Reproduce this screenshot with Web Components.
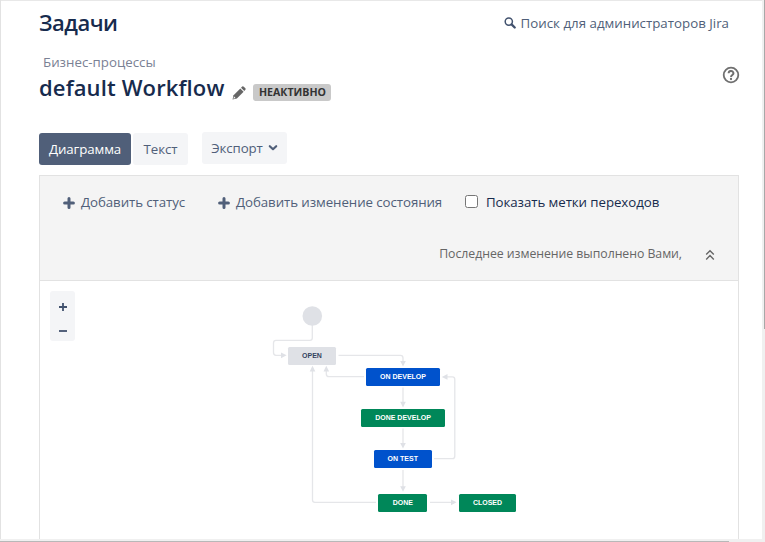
<!DOCTYPE html>
<html lang="ru">
<head>
<meta charset="utf-8">
<title>Задачи</title>
<style>
html,body{margin:0;height:100%;overflow:hidden;background:#fff}
body{font:13.3px/20px "Open Sans","Noto Sans",sans-serif;color:#172b4d}
</style>
</head>
<body>
<admin-page></admin-page>
<script>
const define = (name, css, html, connected) => {
  const t = document.createElement('template');
  t.innerHTML = `<style>:host{display:block;box-sizing:border-box}*{box-sizing:border-box}${css}</style>${html}`;
  customElements.define(name, class extends HTMLElement {
    constructor() {
      super();
      this.attachShadow({mode: 'open'}).append(t.content.cloneNode(true));
    }
    connectedCallback() { if (connected) connected(this); }
  });
};

const ICONS = {
  search: ['0 0 12 12', '<circle cx="4.8" cy="4.6" r="3.6" fill="none" stroke="currentColor" stroke-width="1.5"/><path d="M7.6 7.4L10.7 10.5" stroke="currentColor" stroke-width="2.3" stroke-linecap="round"/>'],
  pencil: ['0 0 14 14', '<path d="M.5 13.6L1.6 9.2 8.3 2.5 11.6 5.8 4.9 12.5z" fill="currentColor"/><path d="M9 1.8L10.2.6q.8-.6 1.6.1l1.6 1.6q.6.8 0 1.5L12.3 5.1z" fill="currentColor"/><path d="M1.3 12.8L2.1 10.6 3.5 12z" fill="#fff"/>'],
  help: ['0 0 18 18', '<circle cx="9" cy="9" r="7.3" fill="none" stroke="currentColor" stroke-width="1.8"/><path d="M6.6 7.2a2.4 2.2 0 1 1 3.6 1.9Q9 9.8 9 11" fill="none" stroke="currentColor" stroke-width="1.9"/><circle cx="9" cy="13" r="1.15" fill="currentColor"/>'],
  plus: ['0 0 12 12', '<path d="M6 1.6V10.4M1.6 6H10.4" stroke="currentColor" stroke-width="3" stroke-linecap="round"/>'],
  chevron: ['0 0 10 8', '<path d="M1.8 2.2L5 5.2 8.2 2.2" fill="none" stroke="currentColor" stroke-width="2.2" stroke-linecap="round" stroke-linejoin="round"/>'],
  collapse: ['0 0 10 12', '<path d="M1.2 5.6L5 1.8 8.8 5.6M1.2 10.4L5 6.6 8.8 10.4" fill="none" stroke="currentColor" stroke-width="1.4"/>'],
  zoomin: ['0 0 10 10', '<path d="M5 1V9M1 5H9" stroke="currentColor" stroke-width="1.8"/>'],
  zoomout: ['0 0 10 10', '<path d="M1 5H9" stroke="currentColor" stroke-width="1.8"/>']
};
define('ui-icon', ':host{display:block;flex:none}svg{display:block;width:100%;height:100%}', '<svg></svg>', el => {
  const [box, body] = ICONS[el.getAttribute('name')];
  const svg = el.shadowRoot.querySelector('svg');
  svg.setAttribute('viewBox', box);
  svg.innerHTML = body;
});

define('ui-button', `:host{display:flex;align-items:center;justify-content:center;height:32px;border-radius:3px;background:#f4f5f7;color:#505f79;letter-spacing:-.1px}
:host([active]){background:#505f79;color:#fff}`, '<slot></slot>');

define('ui-lozenge', ':host{height:17px;width:78px;border-radius:3px;background:#c9c9c9;color:#333;font:bold 10.6px/17px "Open Sans",sans-serif;text-align:center;white-space:nowrap}', '<slot></slot>');

define('page-header', `:host{padding:0 25px 0 39px;height:133px}
.row{display:flex;justify-content:space-between}
h1,h2{margin:0;font-size:22px;font-weight:600;line-height:30px;white-space:nowrap}
h1{padding-top:7px;width:80px;letter-spacing:-.5px}
h2{letter-spacing:.13px}
.find{display:flex;align-items:center;height:20px;margin:13px 11px 0 0;color:#505f79;gap:5px}
.find ui-icon{width:12px;height:12px;color:#42526e}
.main{display:flex;justify-content:space-between;margin-top:15px}
.crumb{margin-left:4px;color:#7a8194}
.title{display:flex;align-items:center;height:30px}
.title ui-icon{width:14px;height:14px;color:#666;margin:12px 7px 0 8px}
.title ui-lozenge{margin-top:10px}
.help{width:18px;height:18px;color:#707070;margin:14px 0 0}
`, `<div class="row"><h1><span>Задачи</span></h1><div class="find"><ui-icon name="search"></ui-icon><span>Поиск для администраторов Jira</span></div></div>
<div class="main"><div><div class="crumb"><span>Бизнес-процессы</span></div><div class="title"><h2>default Workflow</h2><ui-icon name="pencil"></ui-icon><ui-lozenge>НЕАКТИВНО</ui-lozenge></div></div><ui-icon class="help" name="help"></ui-icon></div>`);

define('view-switcher', `:host{display:flex;padding-left:39px;height:42px;white-space:nowrap}
.a{width:92px;margin-right:2px}.b{width:55px;margin-right:14px}.c{width:85px;margin-top:-1px;gap:5px}.c ui-icon{width:10px;height:8px}`,
`<ui-button class="a" active>Диаграмма</ui-button><ui-button class="b">Текст</ui-button><ui-button class="c"><span>Экспорт</span><ui-icon name="chevron"></ui-icon></ui-button>`);

define('workflow-toolbar', `:host{height:105px;background:#f4f4f4;border-bottom:1px solid #e2e2e2;padding:16px 23px 0 23px;white-space:nowrap}
.row{display:flex;align-items:center;height:20px;color:#505f79;letter-spacing:-.08px}
.item{display:flex;align-items:center;gap:6px}.item ui-icon{width:12px;height:12px;margin-top:1px}
.one{width:155px}.two{width:247px}
.check{display:flex;align-items:center;gap:8px;color:#172b4d}
.check input{margin:-2px 0 0;width:13px;height:13px}
.last{display:flex;align-items:center;justify-content:flex-end;height:20px;margin-top:32px;color:#666;font-size:12.3px;letter-spacing:-.05px;gap:23px}
.last ui-icon{width:10px;height:12px;margin-top:2px}`,
`<div class="row"><div class="item one"><ui-icon name="plus"></ui-icon><span>Добавить статус</span></div><div class="item two"><ui-icon name="plus"></ui-icon><span>Добавить изменение состояния</span></div><label class="check"><input type="checkbox"><span>Показать метки переходов</span></label></div>
<div class="last"><span>Последнее изменение выполнено Вами,</span><ui-icon name="collapse"></ui-icon></div>`);

define('zoom-control', `:host{display:flex;flex-direction:column;align-items:center;justify-content:space-between;width:25px;height:50px;padding:11px 0 5px;border-radius:3px;background:#f4f5f7;color:#42526e}ui-icon{width:10px;height:10px}`,
`<ui-icon name="zoomin"></ui-icon><ui-icon name="zoomout"></ui-icon>`);

define('workflow-node', `:host{position:absolute;height:18px;border-radius:1.5px;background:#008759;color:#fff;font:bold 7px/18px "Liberation Sans",Arial,sans-serif;text-align:center;white-space:nowrap}
:host([kind=todo]){background:#dfe1e6;color:#35445f}:host([kind=progress]){background:#0052cc}`, '<slot></slot>');

/* The canvas coordinates are relative to the panel's inner top-left corner. */
define('workflow-canvas', `:host{position:relative;height:261px;padding:10px}
svg{position:absolute;left:0;top:0;width:698px;height:259px}`,
`<svg viewBox="40 281 698 259"><g fill="none" stroke="#e5e6e9" stroke-width="1.3">
<path d="M312.3 325V338Q312.3 340.3 310 340.3H276Q273.5 340.3 273.5 343V352.5Q273.5 355.3 276 355.3H282"/>
<path d="M338.5 355.3H400.5Q403 355.3 403 358V362"/><path d="M364 376.7H329Q326.3 376.7 326.3 374V370"/>
<path d="M403 387.5V403M403 428.5V444M403 470V487M430 502.3H453"/>
<path d="M434 458.7H452.5Q454.8 458.7 454.8 456V379.5Q454.8 376.9 452.5 376.9H446"/>
<path d="M376 502.3H315Q312.5 502.3 312.5 500V370"/></g>
<circle cx="312.3" cy="316" r="9.8" fill="#dfe1e6"/>
<g fill="#dfe1e6"><path d="M281 352.4V358.2L286.6 355.3z"/><path d="M400.2 361H405.8L403 366.5z"/><path d="M323.5 371.5H329.1L326.3 365.8z"/><path d="M309.7 371.5H315.3L312.5 365.8z"/><path d="M400.2 401.8H405.8L403 407.4z"/><path d="M400.2 443H405.8L403 448.6z"/><path d="M400.2 486.2H405.8L403 491.8z"/><path d="M447.5 374V379.8L441.8 376.9z"/><path d="M451 499.4V505.2L456.6 502.3z"/></g></svg>
<zoom-control></zoom-control>
<workflow-node kind="todo" style="left:248px;top:65.5px;width:48px">OPEN</workflow-node>
<workflow-node kind="progress" style="left:326px;top:87px;width:74px">ON DEVELOP</workflow-node>
<workflow-node style="left:321px;top:128px;width:84px">DONE DEVELOP</workflow-node>
<workflow-node kind="progress" style="left:333.5px;top:169px;width:58.5px">ON TEST</workflow-node>
<workflow-node style="left:338.3px;top:212.5px;width:49px">DONE</workflow-node>
<workflow-node style="left:419px;top:212.5px;width:57px">CLOSED</workflow-node>`);

define('workflow-panel', ':host{margin-left:39px;width:700px;height:364px;border:1px solid #e2e2e2;border-bottom:0;}', '<workflow-toolbar></workflow-toolbar><workflow-canvas></workflow-canvas>');

define('admin-page', `:host{position:relative;width:765px;height:542px;overflow:hidden}
.edge{position:absolute;background:#f0f0f0}
.top{left:0;top:0;width:765px;height:1px;background:#e8e8e8}.left{left:0;top:0;width:1px;height:539px;background:#e2e2e2}
.right{right:0;top:0;width:3px;height:542px}.right i{position:absolute;right:0;top:0;width:1px;height:329px;background:#a8a8a8}
.bottom{left:0;bottom:0;width:765px;height:3px}.bottom i{position:absolute;left:0;bottom:0;width:729px;height:1px;background:#b8b8b8}`,
`<page-header></page-header><view-switcher></view-switcher><workflow-panel></workflow-panel>
<div class="edge top"></div><div class="edge left"></div><div class="edge bottom"></div><div class="edge right"><i></i></div><div class="edge bottom" style="background:none"><i></i></div>`);
</script>
</body>
</html>
